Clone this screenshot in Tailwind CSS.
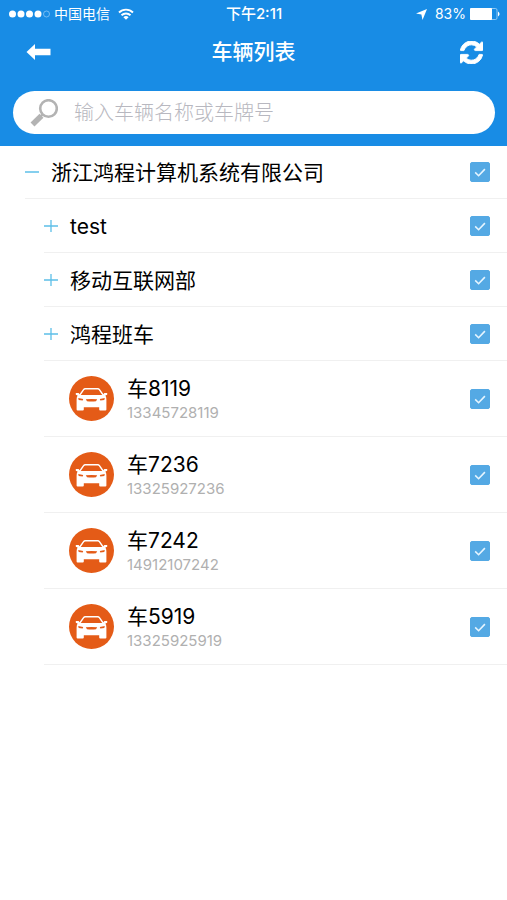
<!DOCTYPE html>
<html lang="zh-CN">
<head>
<meta charset="utf-8">
<meta name="viewport" content="width=device-width, initial-scale=1">
<title>车辆列表</title>
<script src="https://cdn.jsdelivr.net/npm/@tailwindcss/browser@4"></script>
</head>
<body class="min-h-screen bg-white font-['Inter','Noto_Sans_CJK_SC',sans-serif] text-black">
<svg class="hidden" aria-hidden="true">
  <symbol id="plus" viewBox="0 0 14 14"><path d="M0 7h14M7 1v12" fill="none" stroke="#5cbfe8" stroke-width="1.3"/></symbol>
  <symbol id="minus" viewBox="0 0 14 14"><path d="M0 7h14" fill="none" stroke="#5cbfe8" stroke-width="1.5"/></symbol>
  <symbol id="check" viewBox="0 0 20 20"><path d="M5.2 10.4l3.4 3.3 6.3-6.6" fill="none" stroke="#e6f5ff" stroke-width="1.6"/></symbol>
  <symbol id="car" viewBox="0 0 45 45">
    <circle cx="22.5" cy="22.5" r="22.5" fill="#e45b17"/>
    <path d="M10.500 19.500L14.600 13.600q.6-.9 1.700-.9h12.400q1.100 0 1.700.9l4.100 5.900" fill="none" stroke="#fff" stroke-width="1.400"/>
    <path d="M6.800 17h2.800l1.600 2h22.600l1.600-2h2.800v1.700l-1.800.8q1 1.500 1 4V33.500q0 1-1 1h-5.200q-1 0-1-1V31.300H14.800v2.200q0 1-1 1H8.600q-1 0-1-1V23.500q0-2.500 1-4l-1.800-.8z" fill="#fff"/>
    <path d="M9.200 21.900l5 1.200-.5 1.500-4-.6zM35.800 21.900l-5 1.200.5 1.500 4-.6zM16.800 23.300q5.700-.7 11.400 0l-1.200 1.900q-4.500.7-9 0z" fill="#e45b17"/>
  </symbol>
</svg>

<header class="bg-[#188ce5] pb-3 text-white">
  <div class="grid h-7 grid-cols-[1fr_auto_1fr] items-center pr-[7px] pl-2 text-[14px] leading-5">
    <div class="flex items-center gap-1">
      <svg class="h-2 w-[42px]" viewBox="0 0 42 8" aria-hidden="true"><g fill="#fff"><circle cx="4.500" cy="4" r="3.500"/><circle cx="13" cy="4" r="3.500"/><circle cx="21.500" cy="4" r="3.500"/><circle cx="30" cy="4" r="3.500"/></g><circle cx="38.500" cy="4" r="3" fill="none" stroke="#8cc6f5" stroke-width=".8"/></svg>
      <span class="mr-1 whitespace-nowrap">中国电信</span>
      <svg class="h-3 w-4" viewBox="0 0 16 12" aria-hidden="true"><path d="M1 4.500a10 10 0 0 1 14 0M3.500 7.300a6.400 6.400 0 0 1 9 0" fill="none" stroke="#fff" stroke-width="1.900"/><path d="M8 11.800L5.400 9.200a3.700 3.700 0 0 1 5.200 0z" fill="#fff"/></svg>
    </div>
    <time class="text-[15px] font-medium">下午2:11</time>
    <div class="flex items-center justify-end gap-1">
      <svg class="mr-1 size-[11px]" viewBox="0 0 11 11" aria-hidden="true"><path d="M11 0L6.500 11 5.400 5.600 0 4.600z" fill="#fff"/></svg>
      <span>83%</span>
      <svg class="h-3 w-[30px]" viewBox="0 0 30 12" aria-hidden="true"><rect x=".5" y=".5" width="26.500" height="11" rx="1.500" fill="none" stroke="#a9d5f8" stroke-width=".8"/><rect width="22" height="12" rx="1" fill="#fff"/><path d="M28 3.500q3.200 2.500 0 5z" fill="#fff"/></svg>
    </div>
  </div>
  <div class="grid h-12 grid-cols-[1fr_auto_1fr] items-center px-6">
    <button type="button" aria-label="返回" class="justify-self-start"><svg class="h-4 w-7" viewBox="0 0 28 16" aria-hidden="true"><path d="M2.500 8L11 0v4.800h15.500v6.400H11V16z" fill="#fff"/></svg></button>
    <h1 class="text-[21px] leading-7 font-medium">车辆列表</h1>
    <button type="button" aria-label="刷新" class="justify-self-end"><svg class="size-[23px]" viewBox="0 0 1536 1536" aria-hidden="true"><path d="M1511 928q0 5-1 7-64 268-268 434.500T764 1536q-146 0-282.500-55T238 1324l-129 129q-19 19-45 19t-45-19-19-45V960q0-26 19-45t45-19h448q26 0 45 19t19 45-19 45l-137 137q71 66 161 102t187 36q134 0 250-65t186-179q11-17 53-117 8-23 30-23h192q13 0 22.500 9.500t9.500 22.500zm25-800v448q0 26-19 45t-45 19h-448q-26 0-45-19t-19-45 19-45l138-138Q969 256 768 256q-134 0-250 65T332 500q-11 17-53 117-8 23-30 23H50q-13 0-22.500-9.500T18 608v-7q65-268 270-434.500T768 0q146 0 284 55.500T1297 212l130-129q19-19 45-19t45 19 19 45z" fill="#fff" stroke="#fff" stroke-width="60"/></svg></button>
  </div>
  <form role="search" class="mt-[15px] mr-3 ml-[13px] flex h-[43px] items-center gap-4 rounded-full bg-white px-[17px]">
    <svg class="size-7 shrink-0" viewBox="0 0 28 28" aria-hidden="true"><circle cx="18.500" cy="9.500" r="8.300" fill="none" stroke="#b3b3b3" stroke-width="2.600"/><path d="M13 15l-3 3" stroke="#b3b3b3" stroke-width="2.400"/><path d="M11.500 16.800L2.500 25.500" stroke="#b3b3b3" stroke-width="5.600"/></svg>
    <input type="search" aria-label="搜索车辆" placeholder="输入车辆名称或车牌号" class="min-w-0 flex-1 text-[20px] leading-7 font-light text-black outline-none placeholder:text-[#b8b8c0]">
  </form>
</header>

<main>
  <ul>
    <li>
      <div class="ml-[25px] flex h-[53px] items-center gap-3 border-b border-[#f0f0f0] pr-[17px]">
        <button type="button" aria-label="收起" aria-expanded="true"><svg class="size-[14px]"><use href="#minus"/></svg></button>
        <label for="c1" class="flex-1 pt-0.5 text-[21px] leading-7">浙江鸿程计算机系统有限公司</label>
        <span class="grid size-5 shrink-0"><input id="c1" type="checkbox" checked class="peer col-start-1 row-start-1 size-5 appearance-none rounded-xs border border-[#54a9e4] checked:bg-[#54a9e4]"><svg class="pointer-events-none invisible col-start-1 row-start-1 size-5 peer-checked:visible"><use href="#check"/></svg></span>
      </div>
      <ul class="ml-11">
        <li class="flex h-[54px] items-center gap-3 border-b border-[#f0f0f0] pr-[17px]">
          <button type="button" aria-label="展开" aria-expanded="false"><svg class="size-[14px]"><use href="#plus"/></svg></button>
          <label for="c2" class="flex-1 pt-0.5 text-[21px] leading-7">test</label>
          <span class="grid size-5 shrink-0"><input id="c2" type="checkbox" checked class="peer col-start-1 row-start-1 size-5 appearance-none rounded-xs border border-[#54a9e4] checked:bg-[#54a9e4]"><svg class="pointer-events-none invisible col-start-1 row-start-1 size-5 peer-checked:visible"><use href="#check"/></svg></span>
        </li>
        <li class="flex h-[54px] items-center gap-3 border-b border-[#f0f0f0] pr-[17px]">
          <button type="button" aria-label="展开" aria-expanded="false"><svg class="size-[14px]"><use href="#plus"/></svg></button>
          <label for="c3" class="flex-1 pt-0.5 text-[21px] leading-7">移动互联网部</label>
          <span class="grid size-5 shrink-0"><input id="c3" type="checkbox" checked class="peer col-start-1 row-start-1 size-5 appearance-none rounded-xs border border-[#54a9e4] checked:bg-[#54a9e4]"><svg class="pointer-events-none invisible col-start-1 row-start-1 size-5 peer-checked:visible"><use href="#check"/></svg></span>
        </li>
        <li class="flex h-[54px] items-center gap-3 border-b border-[#f0f0f0] pr-[17px]">
          <button type="button" aria-label="展开" aria-expanded="false"><svg class="size-[14px]"><use href="#plus"/></svg></button>
          <label for="c4" class="flex-1 pt-0.5 text-[21px] leading-7">鸿程班车</label>
          <span class="grid size-5 shrink-0"><input id="c4" type="checkbox" checked class="peer col-start-1 row-start-1 size-5 appearance-none rounded-xs border border-[#54a9e4] checked:bg-[#54a9e4]"><svg class="pointer-events-none invisible col-start-1 row-start-1 size-5 peer-checked:visible"><use href="#check"/></svg></span>
        </li>
        <li class="flex h-[76px] items-center gap-[13px] border-b border-[#f0f0f0] pr-[17px] pl-[25px]">
          <svg class="size-[45px] shrink-0" aria-hidden="true"><use href="#car"/></svg>
          <label for="c5" class="flex-1"><span class="block text-[21px] leading-7">车8119</span><span class="block text-[15px] leading-5 text-[#b0b0b0]">13345728119</span></label>
          <span class="grid size-5 shrink-0"><input id="c5" type="checkbox" checked class="peer col-start-1 row-start-1 size-5 appearance-none rounded-xs border border-[#54a9e4] checked:bg-[#54a9e4]"><svg class="pointer-events-none invisible col-start-1 row-start-1 size-5 peer-checked:visible"><use href="#check"/></svg></span>
        </li>
        <li class="flex h-[76px] items-center gap-[13px] border-b border-[#f0f0f0] pr-[17px] pl-[25px]">
          <svg class="size-[45px] shrink-0" aria-hidden="true"><use href="#car"/></svg>
          <label for="c6" class="flex-1"><span class="block text-[21px] leading-7">车7236</span><span class="block text-[15px] leading-5 text-[#b0b0b0]">13325927236</span></label>
          <span class="grid size-5 shrink-0"><input id="c6" type="checkbox" checked class="peer col-start-1 row-start-1 size-5 appearance-none rounded-xs border border-[#54a9e4] checked:bg-[#54a9e4]"><svg class="pointer-events-none invisible col-start-1 row-start-1 size-5 peer-checked:visible"><use href="#check"/></svg></span>
        </li>
        <li class="flex h-[76px] items-center gap-[13px] border-b border-[#f0f0f0] pr-[17px] pl-[25px]">
          <svg class="size-[45px] shrink-0" aria-hidden="true"><use href="#car"/></svg>
          <label for="c7" class="flex-1"><span class="block text-[21px] leading-7">车7242</span><span class="block text-[15px] leading-5 text-[#b0b0b0]">14912107242</span></label>
          <span class="grid size-5 shrink-0"><input id="c7" type="checkbox" checked class="peer col-start-1 row-start-1 size-5 appearance-none rounded-xs border border-[#54a9e4] checked:bg-[#54a9e4]"><svg class="pointer-events-none invisible col-start-1 row-start-1 size-5 peer-checked:visible"><use href="#check"/></svg></span>
        </li>
        <li class="flex h-[76px] items-center gap-[13px] border-b border-[#f0f0f0] pr-[17px] pl-[25px]">
          <svg class="size-[45px] shrink-0" aria-hidden="true"><use href="#car"/></svg>
          <label for="c8" class="flex-1"><span class="block text-[21px] leading-7">车5919</span><span class="block text-[15px] leading-5 text-[#b0b0b0]">13325925919</span></label>
          <span class="grid size-5 shrink-0"><input id="c8" type="checkbox" checked class="peer col-start-1 row-start-1 size-5 appearance-none rounded-xs border border-[#54a9e4] checked:bg-[#54a9e4]"><svg class="pointer-events-none invisible col-start-1 row-start-1 size-5 peer-checked:visible"><use href="#check"/></svg></span>
        </li>
      </ul>
    </li>
  </ul>
</main>
</body>
</html>
